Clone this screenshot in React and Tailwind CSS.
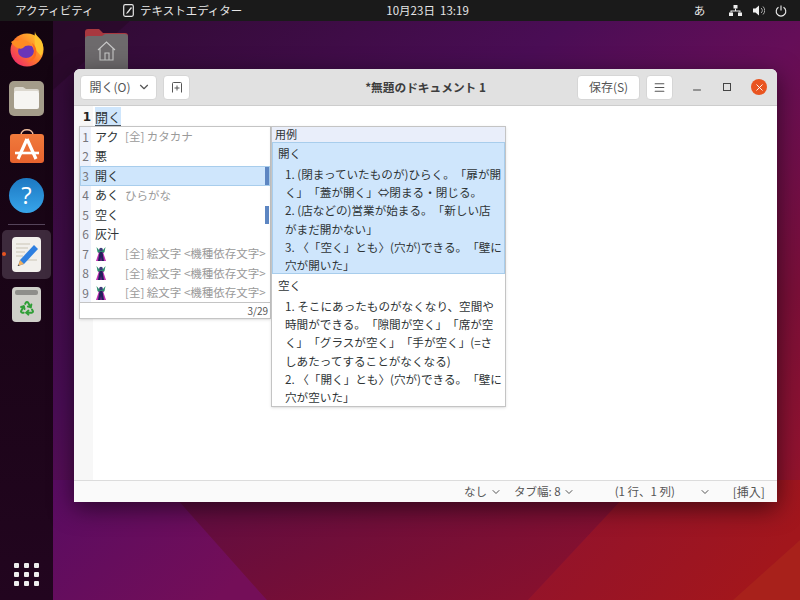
import { ChevronDown, Minus, Menu, X, Recycle } from 'lucide-react';

const rows = [
  { n: 1, word: 'アク', note: '[全] カタカナ' },
  { n: 2, word: '悪' },
  { n: 3, word: '開く', selected: true },
  { n: 4, word: 'あく', note: 'ひらがな' },
  { n: 5, word: '空く' },
  { n: 6, word: '灰汁' },
  { n: 7, emoji: true, note: '[全] 絵文字 <機種依存文字>' },
  { n: 8, emoji: true, note: '[全] 絵文字 <機種依存文字>' },
  { n: 9, emoji: true, note: '[全] 絵文字 <機種依存文字>' },
];

const Wallpaper = () => (
  <svg className="absolute inset-0" width="800" height="600" viewBox="0 0 800 600">
    <defs>
      <linearGradient id="wall" x1="0" y1="0" x2="1" y2="1">
        <stop offset="0" stopColor="#2a0a2c" />
        <stop offset="0.375" stopColor="#4a0d55" />
        <stop offset="0.53" stopColor="#650e58" />
        <stop offset="0.74" stopColor="#7a0f38" />
        <stop offset="0.87" stopColor="#8f1230" />
        <stop offset="1" stopColor="#a0181c" />
      </linearGradient>
      <linearGradient id="facetLeft" x1="0" y1="0" x2="1" y2="0.6">
        <stop offset="0" stopColor="#580c62" />
        <stop offset="1" stopColor="#740e58" />
      </linearGradient>
      <linearGradient id="facetMid" x1="0" y1="0" x2="1" y2="0.5">
        <stop offset="0" stopColor="#5a0c44" />
        <stop offset="1" stopColor="#86102e" />
      </linearGradient>
      <linearGradient id="facetRight" x1="0" y1="0" x2="1" y2="0.4">
        <stop offset="0" stopColor="#8e1230" />
        <stop offset="1" stopColor="#a2161c" />
      </linearGradient>
    </defs>
    <rect width="800" height="600" fill="url(#wall)" />
    <polygon points="53,480 160,480 267,600 53,600" fill="url(#facetLeft)" />
    <polygon points="160,480 640,480 528,600 267,600" fill="url(#facetMid)" />
    <polygon points="640,480 800,480 800,540 733,600 528,600" fill="url(#facetRight)" />
    <polygon points="733,600 800,540 800,600" fill="#a8211b" />
    <polygon points="53,21 130,21 53,90" fill="#240822" opacity="0.5" />
  </svg>
);

const Firefox = () => (
  <svg width="34" height="36" viewBox="0 0 34 36">
    <defs>
      <linearGradient id="ffo" x1="0.9" y1="0.1" x2="0.1" y2="0.9">
        <stop offset="0" stopColor="#ffc42e" />
        <stop offset="0.5" stopColor="#ff7a2a" />
        <stop offset="1" stopColor="#ee2a6a" />
      </linearGradient>
    </defs>
    <circle cx="17" cy="19" r="16.500" fill="url(#ffo)" />
    <path d="M25 0c0 4 3 5 6 9 3 5 3 11 0 16l-6-7c0-6-1-12 0-18z" fill="#ffc42e" />
    <ellipse cx="16" cy="20" rx="8" ry="7" fill="#6a35b8" />
    <path d="M1 11c3-2 5-2 7-1 1-2 3-2 4-1 4 0 8 2 10 6-3-1-7-1-9 2-3 2-8 0-12-6z" fill="#ff8c22" />
    <path d="M22 12c4 3 5 7 4 12-1 4-5 7-9 7 4-2 7-6 7-10 0-3-1-6-2-9z" fill="#ff6a1e" />
  </svg>
);

const DockFiles = () => (
  <div className="w-[35px] h-[35px] rounded-[5px] bg-[#a49c8a] flex items-center justify-center">
    <svg width="27" height="24" viewBox="0 0 27 24">
      <path d="M1 3a2 2 0 0 1 2-2h7l3 2h11a2 2 0 0 1 2 2v1H1z" fill="#dcd8cf" />
      <rect x="1" y="5" width="25" height="18" rx="2" fill="#f6f5f2" />
    </svg>
  </div>
);

const DockStore = () => (
  <svg width="36" height="36" viewBox="0 0 36 36">
    <defs>
      <linearGradient id="bag" x1="0" y1="0" x2="0" y2="1">
        <stop offset="0" stopColor="#f07a3c" />
        <stop offset="1" stopColor="#e8632e" />
      </linearGradient>
    </defs>
    <path d="M12 7c0-7 12-7 12 0" fill="none" stroke="#f2c0a0" strokeWidth="1.500" />
    <rect x="1" y="6" width="34" height="29" rx="3" fill="url(#bag)" />
    <path d="M18 11 9 31M18 11l9 20" stroke="#fff" strokeWidth="3.200" fill="none" />
    <path d="M6 25h24" stroke="#fff" strokeWidth="2.600" />
  </svg>
);

const DockHelp = () => (
  <div className="w-[35px] h-[35px] rounded-full bg-gradient-to-b from-[#1c78c2] to-[#38a5ea] flex items-center justify-center text-white text-[24px] leading-none font-['Open_Sans',sans-serif]">
    ?
  </div>
);

const DockEditor = () => (
  <div className="relative w-[29px] h-[35px] rounded-[4px] bg-[#f2f0ec]">
    <svg className="absolute inset-0" width="29" height="35" viewBox="0 0 29 35">
      <path d="M4 7h14M4 11h12M4 15h9M4 19h7M14 23h11" stroke="#c9c4b4" strokeWidth="1.200" />
      <path d="M22 8l4 4-14 15-6 2 2-6z" fill="#2e7fe0" />
      <path d="M8 23l4 4-6 2z" fill="#f0b060" />
      <path d="M6.500 27.500l1 1-2 .6z" fill="#333" />
    </svg>
  </div>
);

const DockTrash = () => (
  <div className="w-[29px] h-[35px] rounded-[4px] bg-[#cfcfc9] flex flex-col items-center pt-[3px]">
    <div className="w-[23px] h-[5px] bg-[#8e8e8a] rounded-[2px]" />
    <Recycle size={16} strokeWidth={3} className="mt-[5px] text-[#2f9e36]" />
  </div>
);

const Dock = () => (
  <div className="relative w-[53px] shrink-0 bg-gradient-to-b from-[#130410] to-[#22051f] flex flex-col items-center pt-[9px] pb-[14px]">
    <div className="h-[38px] flex items-center"><Firefox /></div>
    <div className="h-[48px] mt-[6px] flex items-center"><DockFiles /></div>
    <div className="h-[48px] flex items-center"><DockStore /></div>
    <div className="h-[48px] mt-[1px] flex items-center"><DockHelp /></div>
    <div className="w-[37px] h-px bg-[#55445a] mt-[5px]" />
    <div className="w-[49px] h-[49px] mt-[5px] rounded-[5px] bg-[#3d2a3c] flex items-center justify-center"><DockEditor /></div>
    <div className="absolute left-[2px] top-[231px] w-[4px] h-[4px] rounded-full bg-[#e95420]" />
    <div className="h-[48px] mt-[1px] flex items-center"><DockTrash /></div>
    <div className="mt-auto grid grid-cols-3 gap-x-[5px] gap-y-[4px]">
      {Array.from({ length: 9 }).map((_, i) => (
        <div key={i} className="w-[5px] h-[5px] rounded-[1px] bg-[#eeeeee]" />
      ))}
    </div>
  </div>
);

const TopBar = () => (
  <div className="h-[21px] shrink-0 bg-[#1a1a1a] flex items-center text-[#e6e6e6] text-[11.500px] relative z-10">
    <span className="ml-[15px] w-[108px]">アクティビティ</span>
    <svg width="11" height="13" viewBox="0 0 11 13">
      <rect x="0.700" y="0.700" width="9.600" height="11.600" rx="1.500" fill="none" stroke="#e6e6e6" strokeWidth="1.200" />
      <path d="M8 3 4 8l-1 2 2-1 4-5z" fill="#e6e6e6" />
    </svg>
    <span className="ml-[6px]">テキストエディター</span>
    <span className="ml-[144px]">10月23日&nbsp;&nbsp;13:19</span>
    <span className="ml-[225px] w-[30px]">あ</span>
    <svg className="ml-[5px]" width="13" height="11" viewBox="0 0 13 11" fill="#eee">
      <rect x="4.500" y="0" width="4" height="3.500" />
      <rect x="0" y="7.500" width="4" height="3.500" />
      <rect x="9" y="7.500" width="4" height="3.500" />
      <path d="M6 3.500h1v2h4.500v2h-1v-1h-8v1h-1v-2H6z" />
    </svg>
    <svg className="ml-[11px]" width="12" height="11" viewBox="0 0 12 11" fill="#eee">
      <path d="M0 3.500h2.500L6 0.500v10l-3.500-3H0z" />
      <path d="M8 3a3 3 0 0 1 0 5M10 1.500a5.500 5.500 0 0 1 0 8" fill="none" stroke="#aaa" />
    </svg>
    <svg className="ml-[10px]" width="12" height="12" viewBox="0 0 12 12" fill="none" stroke="#eee" strokeWidth="1.100">
      <path d="M3.500 2.200a4.800 4.800 0 1 0 5 0M6 0.500v5" />
    </svg>
  </div>
);

const EmojiGlyph = () => (
  <svg width="12" height="16" viewBox="0 0 12 16">
    <path d="M1.500 1l2.500 3h4l2.500-3-1 5-1 1H3.500l-1-1z" fill="#2f8f6f" />
    <circle cx="6" cy="3.500" r="1.800" fill="#3c3a78" />
    <path d="M4 6h4l3 9H1z" fill="#c02fb0" />
    <path d="M4.500 6h3l1.500 9H6.500l-.5-4-.5 4H3z" fill="#23205c" />
  </svg>
);

const CompletionPopup = () => (
  <div className="absolute left-[5px] top-[20px] w-[192px] h-[193px] bg-white border border-[#c4c4c4] shadow-sm flex flex-col text-[12px] text-[#2e3436]">
    <div className="flex-1 min-h-0 overflow-hidden">
      {rows.map((row) => (
        <div
          key={row.n}
          className={`relative h-[19.500px] flex items-center ${row.selected ? 'bg-[#cfe6fc] outline outline-[#a8cdec] -outline-offset-1' : ''}`}
        >
          <span className={`w-[11px] h-full shrink-0 flex items-center justify-center text-[#77767b] ${row.selected ? '' : 'bg-[#eef2fb]'}`}>{row.n}</span>
          <span className="ml-[4px] w-[30px] shrink-0 flex items-center">
            {row.emoji ? <EmojiGlyph /> : row.word}
          </span>
          {row.note && <span className="text-[11.500px] text-[#9a9a9a] whitespace-nowrap">{row.note}</span>}
          {(row.n === 3 || row.n === 5) && (
            <span className="absolute right-[1px] top-[1px] bottom-[1px] w-[4px] bg-[#5d86c2]" />
          )}
        </div>
      ))}
    </div>
    <div className="h-[16px] shrink-0 border-t border-[#c4c4c4] flex items-center justify-end pr-[2px] text-[10px] text-[#555]">
      3/29
    </div>
  </div>
);

const InfoPopup = () => (
  <div className="absolute left-[197px] top-[20px] w-[235px] h-[281px] bg-white border border-[#c4c4c4] shadow-sm text-[11.600px] leading-[18.200px] text-[#2e3436] [text-spacing-trim:space-all]">
    <div className="h-[15px] bg-[#e9eefa] pl-[3px] text-[11px] leading-[15px]">用例</div>
    <div className="h-[132px] bg-[#cfe6fc] border border-[#a8cdec] pt-[1px] pl-[5px]">
      <div className="h-[20px]">開く</div>
      <div className="pl-[7px] mt-[1px] whitespace-nowrap">
        <p>1. (閉まっていたものが)ひらく。「扉が開</p>
        <p>く」「蓋が開く」⇔閉まる・閉じる。</p>
        <p>2. (店などの)営業が始まる。「新しい店</p>
        <p>がまだ開かない」</p>
        <p>3. 〈「空く」とも〉(穴が)できる。「壁に</p>
        <p>穴が開いた」</p>
      </div>
    </div>
    <div className="pt-[2px] pl-[6px]">
      <div className="h-[20px]">空く</div>
      <div className="pl-[7px] mt-[1px] whitespace-nowrap">
        <p>1. そこにあったものがなくなり、空間や</p>
        <p>時間ができる。「隙間が空く」「席が空</p>
        <p>く」「グラスが空く」「手が空く」(=さ</p>
        <p>しあたってすることがなくなる)</p>
        <p>2. 〈「開く」とも〉(穴が)できる。「壁に</p>
        <p>穴が空いた」</p>
      </div>
    </div>
  </div>
);

const HeaderButton = ({ className, children }) => (
  <div className={`h-[25px] rounded-[4px] bg-white border border-[#d6d6d6] flex items-center justify-center text-[12px] text-[#555] ${className}`}>
    {children}
  </div>
);

const EditorWindow = () => (
  <div className="absolute left-[21px] top-[48px] w-[703px] h-[433px] rounded-t-[6px] bg-white flex flex-col shadow-[0_6px_24px_rgba(0,0,0,0.55)]">
    <div className="h-[37px] shrink-0 rounded-t-[6px] bg-[#e1e1e1] border-b border-[#cdcdcd] flex items-center px-[6px]">
      <div className="flex-1 flex items-center">
        <HeaderButton className="w-[77px]">
          <span className="ml-[3px]">開く(O)</span>
          <ChevronDown size={14} className="ml-[6px]" />
        </HeaderButton>
        <HeaderButton className="w-[27px] ml-[6px]">
          <svg width="12" height="12" viewBox="0 0 12 12" fill="none" stroke="#555" strokeWidth="1">
            <path d="M1.500 11.500v-9a1 1 0 0 1 1-1h7a1 1 0 0 1 1 1v9M6 4.500v5M3.500 7h5" />
          </svg>
        </HeaderButton>
      </div>
      <div className="text-center text-[11.700px] font-bold text-[#3d3d3d]">*無題のドキュメント 1</div>
      <div className="flex-1 flex items-center justify-end">
        <HeaderButton className="w-[63px]">保存(S)</HeaderButton>
        <HeaderButton className="w-[27px] ml-[6px]"><Menu size={13} /></HeaderButton>
        <Minus size={12} className="ml-[18px] mt-[6px] text-[#444]" />
        <div className="ml-[20px] w-[8px] h-[8px] border border-[#444]" />
        <div className="ml-[20px] mr-[4px] w-[16px] h-[16px] rounded-full bg-[#e95420] flex items-center justify-center">
          <X size={11} strokeWidth={2} className="text-white" />
        </div>
      </div>
    </div>
    <div className="flex-1 min-h-0 flex relative">
      <div className="w-[19px] shrink-0 bg-[#f7f7f7] pt-[1px] text-right pr-[2px] text-[12px] leading-[20px] font-bold text-[#222] font-['DejaVu_Sans',sans-serif]">1</div>
      <div className="flex-1 pt-[1px] pl-[2px]">
        <span className="block w-[26px] h-[19px] bg-[#cfe6fc] border-b border-[#4a5560] text-[13px] leading-[19px] text-[#2e3436]">開く</span>
      </div>
      <CompletionPopup />
      <InfoPopup />
    </div>
    <div className="h-[22px] shrink-0 bg-[#fafafa] border-t border-[#dcdcdc] flex items-center text-[11.500px] text-[#555]">
      <span className="ml-[390px]">なし</span>
      <ChevronDown size={12} className="ml-[3px]" />
      <span className="ml-[12px]">タブ幅: 8</span>
      <ChevronDown size={12} className="ml-[2px]" />
      <span className="ml-[40px] w-[84px]">(1 行、1 列)</span>
      <ChevronDown size={12} />
      <span className="ml-[22px] text-[12px]">[挿入]</span>
    </div>
  </div>
);

const HomeFolder = () => (
  <div className="absolute left-[32px] top-[8px] w-[43px] h-[41px]">
    <svg width="43" height="41" viewBox="0 0 43 41">
      <path d="M0 3a3 3 0 0 1 3-3h11l4 4h22a3 3 0 0 1 3 3v10H0z" fill="#a8383f" />
      <path d="M0 10a3 3 0 0 1 3-3h14l3-2h20a3 3 0 0 1 3 3v33H0z" fill="#6d6a6c" />
      <path d="M13 21l8.500-8 8.500 8M15 19v12h13V19M20 31v-7h4v7" fill="none" stroke="#c8c8c8" strokeWidth="1.100" />
    </svg>
  </div>
);

export default function App() {
  return (
    <div className="relative w-[800px] h-[600px] overflow-hidden flex flex-col font-['Noto_Sans_CJK_JP',sans-serif]">
      <Wallpaper />
      <TopBar />
      <div className="flex-1 min-h-0 flex relative">
        <Dock />
        <div className="flex-1 relative">
          <HomeFolder />
          <EditorWindow />
        </div>
      </div>
    </div>
  );
}
